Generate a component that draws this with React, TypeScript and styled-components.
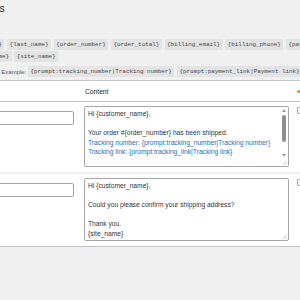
import React from "react";
import styled, { createGlobalStyle } from "styled-components";

const Global = createGlobalStyle`
  html, body { margin: 0; padding: 0; background: #f0f0f1; overflow: hidden; }
  #root { width: 300px; height: 300px; overflow: hidden; }
`;

const Wrap = styled.div`
  margin-left: -43px;
  width: 400px;
  display: flex;
  flex-direction: column;
  font-family: "Liberation Sans", Arial, sans-serif;
  color: #1d2327;
`;

const Title = styled.h1`
  margin: 0 0 23px;
  font-size: 10.5px;
  font-weight: 400;
  line-height: 16px;
  color: #1d2327;
`;

const TagList = styled.div`
  display: flex;
  flex-wrap: wrap;
  column-gap: 2.7px;
  row-gap: 1px;
`;

const Tag = styled.code<{ $shift?: number }>`
  display: inline-flex;
  align-items: center;
  height: 11px;
  padding: 0 2.5px;
  margin-left: ${(p) => p.$shift ?? 0}px;
  background: #e3e3e4;
  font-family: "Liberation Mono", monospace;
  font-size: 5.9px;
  color: #3c434a;
  white-space: nowrap;
`;

const ExampleRow = styled.div`
  display: flex;
  align-items: center;
  gap: 1.6px;
  margin-top: 4px;
  font-size: 6px;
  color: #50575e;
  white-space: nowrap;
`;

const Table = styled.div`
  margin-top: 3px;
  background: #fff;
  border: 1px solid #c3c4c7;
  display: flex;
  flex-direction: column;
`;

const GridRow = styled.div<{ $head?: boolean; $sep?: boolean }>`
  display: grid;
  grid-template-columns: 121px 215px 1fr;
  align-items: ${(p) => (p.$head ? "center" : "start")};
  height: ${(p) => (p.$head ? "20px" : "auto")};
  border-bottom: ${(p) => (p.$head ? "1px solid #c3c4c7" : "none")};
  border-top: ${(p) => (p.$sep ? "2px solid #efeff0" : "none")};
  padding: ${(p) => (p.$head ? "0" : "4px 0 5px")};
`;

const HeadCell = styled.div<{ $pad?: string }>`
  display: flex;
  align-items: center;
  padding: ${(p) => p.$pad ?? "0 6px"};
  font-size: 6.7px;
  color: #1d2327;
  white-space: nowrap;
`;

const Marker = styled.span`
  width: 3px;
  height: 3px;
  border-radius: 50%;
  background: #e08a2c;
`;

const Cell = styled.div<{ $pad?: string }>`
  padding: ${(p) => p.$pad ?? "0 5px"};
`;

const NameInput = styled.input`
  box-sizing: border-box;
  width: 100%;
  height: 14px;
  margin: 0;
  padding: 0 3px;
  border: 1px solid #a2a5a9;
  border-radius: 2px;
  background: #fff;
  font-family: "Liberation Sans", Arial, sans-serif;
  font-size: 6.7px;
  color: #2c3338;
  outline: none;
`;

const Editor = styled.div<{ $h: number }>`
  position: relative;
  box-sizing: border-box;
  height: ${(p) => p.$h}px;
  padding: 1.5px 10px 0 3px;
  border: 1px solid #a2a5a9;
  border-radius: 2px;
  background: #fff;
  overflow: hidden;
  font-size: 6.7px;
  line-height: 9.7px;
  color: #2c3338;
  white-space: pre;
`;

const Line = styled.div<{ $prompt?: boolean }>`
  min-height: 9.7px;
  color: ${(p) => (p.$prompt ? "#2271b1" : "#2c3338")};
`;

const ScrollBar = styled.div`
  position: absolute;
  top: 0;
  right: 0;
  bottom: 0;
  width: 8px;
  display: flex;
  flex-direction: column;
  align-items: center;
  background: #fff;
`;

const Arrow = styled.div`
  height: 7px;
  display: flex;
  align-items: center;
  justify-content: center;
`;

const Track = styled.div`
  flex: 1;
  width: 100%;
  display: flex;
  justify-content: center;
  padding-top: 1px;
`;

const Thumb = styled.div`
  width: 3.5px;
  height: 27px;
  border-radius: 2px;
  background: #8f8f8f;
`;

const Grip = styled.div`
  position: absolute;
  right: 1px;
  bottom: 1px;
  width: 5px;
  height: 5px;
  display: flex;
`;

const Check = styled.div`
  box-sizing: border-box;
  width: 7px;
  height: 7px;
  margin-top: 1px;
  border: 1px solid #a2a5a9;
  border-radius: 1px;
  background: #fff;
`;

const GripIcon = () => (
  <svg width="5" height="5" viewBox="0 0 5 5">
    <line x1="0.5" y1="5" x2="5" y2="0.5" stroke="#b0b0b0" strokeWidth="0.6" />
    <line x1="2.5" y1="5" x2="5" y2="2.5" stroke="#b0b0b0" strokeWidth="0.6" />
  </svg>
);

const Tri = ({ up }: { up?: boolean }) => (
  <svg width="4" height="3" viewBox="0 0 4 3">
    <polygon points={up ? "0,3 4,3 2,0" : "0,0 4,0 2,3"} fill="#9a9a9a" />
  </svg>
);

type L = { t: string; prompt?: boolean };

const rows: { name: string; h: number; scroll: boolean; lines: L[] }[] = [
  {
    name: "Shipped",
    h: 61,
    scroll: true,
    lines: [
      { t: "Hi {customer_name}," },
      { t: "" },
      { t: "Your order #{order_number} has been shipped." },
      { t: "Tracking number: {prompt:tracking_number|Tracking number}", prompt: true },
      { t: "Tracking link: {prompt:tracking_link|Tracking link}", prompt: true },
      { t: "" },
      { t: "Thank you." },
      { t: "{site_name}" },
    ],
  },
  {
    name: "Address",
    h: 63,
    scroll: false,
    lines: [
      { t: "Hi {customer_name}," },
      { t: "" },
      { t: "Could you please confirm your shipping address?" },
      { t: "" },
      { t: "Thank you." },
      { t: "{site_name}" },
    ],
  },
];

const placeholders = [
  "{first_name}",
  "{last_name}",
  "{order_number}",
  "{order_total}",
  "{billing_email}",
  "{billing_phone}",
  "{payment_method}",
  "{company_name}",
  "{site_name}",
];

export default function App() {
  return (
    <>
      <Global />
      <Wrap>
        <Title>Templates</Title>
        <TagList>
          {placeholders.map((p) => (
            <Tag key={p}>{p}</Tag>
          ))}
        </TagList>
        <ExampleRow>
          <span>Custom prompt. Example:</span>
          <Tag>{"{prompt:tracking_number|Tracking number}"}</Tag>
          <Tag $shift={1}>{"{prompt:payment_link|Payment link}"}</Tag>
        </ExampleRow>
        <Table>
          <GridRow $head>
            <HeadCell>Name</HeadCell>
            <HeadCell>Content</HeadCell>
            <HeadCell $pad="0 3px">
              <Marker />
            </HeadCell>
          </GridRow>
          {rows.map((r, i) => (
            <GridRow key={r.name} $sep={i > 0}>
              <Cell>
                <NameInput readOnly value={r.name} />
              </Cell>
              <Cell>
                <Editor $h={r.h}>
                  {r.lines.map((l, j) => (
                    <Line key={j} $prompt={l.prompt}>
                      {l.t}
                    </Line>
                  ))}
                  {r.scroll ? (
                    <ScrollBar>
                      <Arrow>
                        <Tri up />
                      </Arrow>
                      <Track>
                        <Thumb />
                      </Track>
                      <Arrow>
                        <Tri />
                      </Arrow>
                      <Arrow />
                    </ScrollBar>
                  ) : null}
                  <Grip>
                    <GripIcon />
                  </Grip>
                </Editor>
              </Cell>
              <Cell $pad="0 3px">
                <Check />
              </Cell>
            </GridRow>
          ))}
        </Table>
      </Wrap>
    </>
  );
}
